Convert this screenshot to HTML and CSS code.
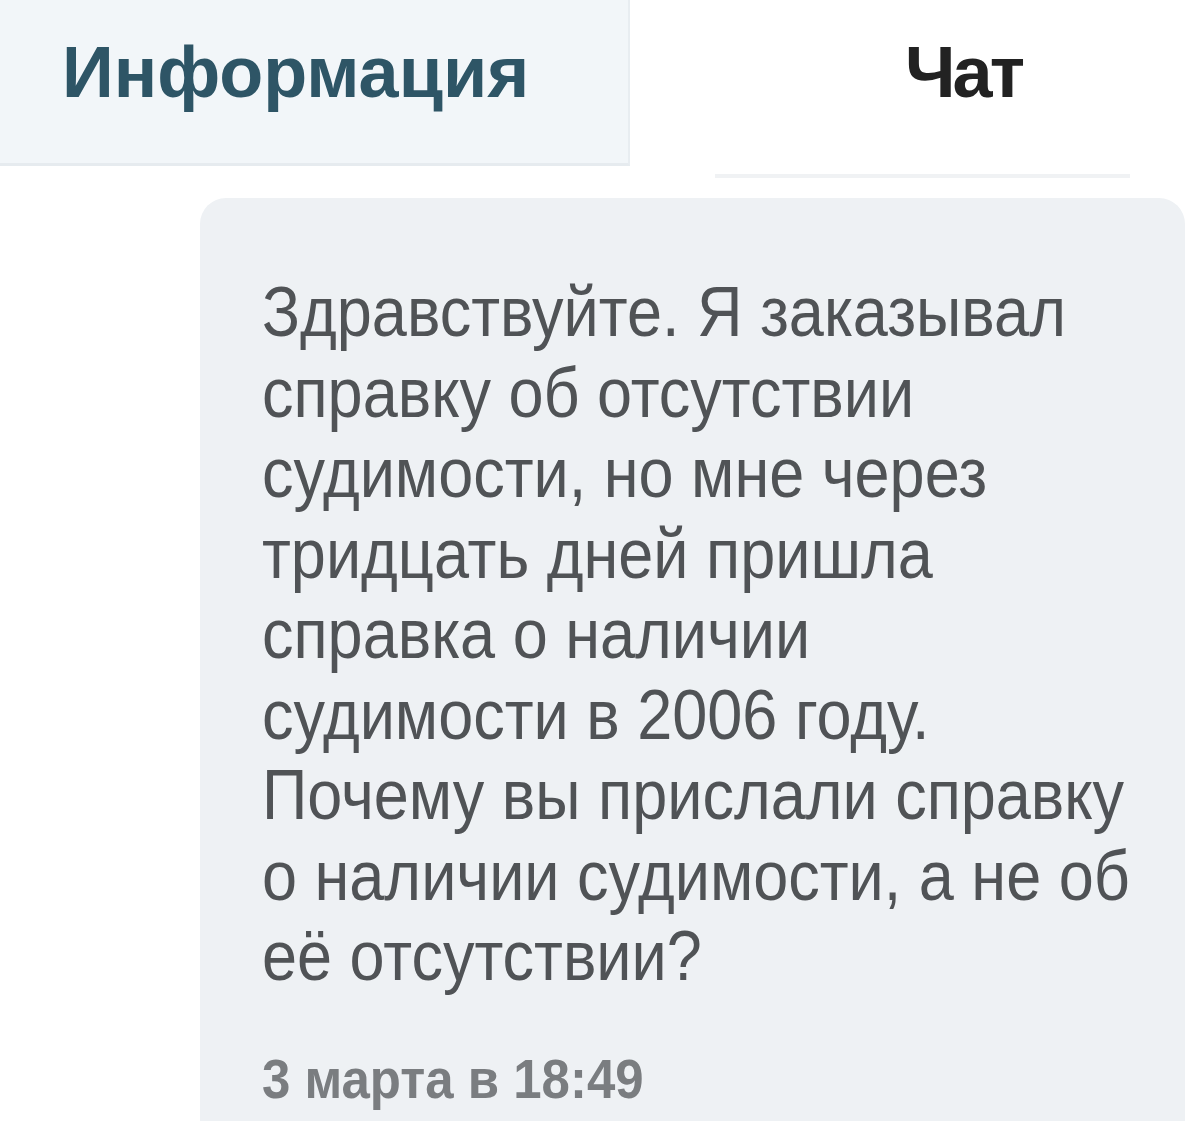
FILE: index.html
```html
<!DOCTYPE html>
<html lang="ru">
<head>
<meta charset="utf-8">
<link rel="stylesheet" href="styles.css">
</head>
<body>
<div class="page">
  <div class="tabs">
    <div class="tab tab-info">Информация</div>
    <div class="tab tab-chat">Чат</div>
  </div>
  <div class="bubble">
    <p class="msg">Здравствуйте. Я заказывал<br>справку об отсутствии<br>судимости, но мне через<br>тридцать дней пришла<br>справка о наличии<br>судимости в 2006 году.<br>Почему вы прислали справку<br>о наличии судимости, а не об<br>её отсутствии?</p>
    <div class="time">3 марта в 18:49</div>
  </div>
</div>
</body>
</html>
```
FILE: styles.css
```css
html, body {
  margin: 0;
  padding: 0;
  background: #ffffff;
}
.page {
  width: 1200px;
  height: 1121px;
  overflow: hidden;
  font-family: "Liberation Sans", Arial, sans-serif;
}
.tabs {
  display: flex;
  height: 178px;
}
.tab {
  font-weight: bold;
  font-size: 72px;
  line-height: 72px;
  box-sizing: border-box;
}
.tab-info {
  width: 630px;
  height: 166px;
  background: #f2f6f9;
  border-right: 2px solid #e8edf1;
  border-bottom: 3px solid #e6ebef;
  color: #2e5566;
  padding: 36px 0 0 62px;
}
.tab-chat {
  flex: 1;
  color: #222222;
  padding: 36px 0 0 275px;
  letter-spacing: -3px;
  position: relative;
}
.tab-chat::after {
  content: "";
  position: absolute;
  left: 85px;
  right: 70px;
  bottom: 0;
  height: 4px;
  background: #f0f2f4;
}
.bubble {
  margin: 20px 15px 0 200px;
  background: #eef1f4;
  border-radius: 26px 26px 0 0;
  padding: 74px 0 0 62px;
  height: 1000px;
  box-sizing: border-box;
}
.msg {
  margin: 0;
  font-size: 70px;
  line-height: 80.5px;
  color: #505356;
  white-space: nowrap;
  transform: scaleX(0.9);
  transform-origin: left top;
}
.time {
  margin-top: 49px;
  font-size: 56px;
  font-weight: bold;
  color: #7a7d80;
  white-space: nowrap;
  transform: scaleX(0.91);
  transform-origin: left top;
}
```
